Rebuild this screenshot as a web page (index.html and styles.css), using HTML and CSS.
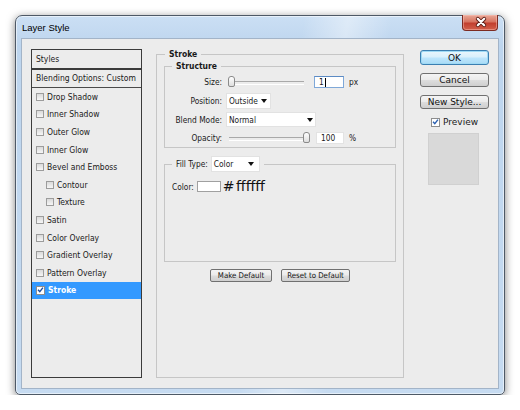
FILE: index.html
```html
<!DOCTYPE html>
<html lang="en">
<head>
<meta charset="utf-8">
<title>Layer Style</title>
<link rel="stylesheet" href="styles.css">
</head>
<body>
<div class="window">
  <div class="titlebar">
    <span class="title">Layer Style</span>
    <div class="close-btn">
      <svg width="36" height="15" viewBox="0 0 36 15">
        <path d="M14.8 3.8 L21.2 10.2 M21.2 3.8 L14.8 10.2" stroke="#5b1c15" stroke-width="4" stroke-linecap="round"/>
        <path d="M14.8 3.8 L21.2 10.2 M21.2 3.8 L14.8 10.2" stroke="#ffffff" stroke-width="2.2" stroke-linecap="round"/>
      </svg>
    </div>
  </div>

  <div class="client">
    <div class="styles-panel">
      <div class="panel-head">Styles</div>
      <div class="panel-blend">Blending Options: Custom</div>
      <ul class="fx-list">
        <li class="fx"><span class="cb"></span>Drop Shadow</li>
        <li class="fx"><span class="cb"></span>Inner Shadow</li>
        <li class="fx"><span class="cb"></span>Outer Glow</li>
        <li class="fx"><span class="cb"></span>Inner Glow</li>
        <li class="fx"><span class="cb"></span>Bevel and Emboss</li>
        <li class="fx sub"><span class="cb"></span>Contour</li>
        <li class="fx sub"><span class="cb"></span>Texture</li>
        <li class="fx"><span class="cb"></span>Satin</li>
        <li class="fx"><span class="cb"></span>Color Overlay</li>
        <li class="fx"><span class="cb"></span>Gradient Overlay</li>
        <li class="fx"><span class="cb"></span>Pattern Overlay</li>
        <li class="fx selected"><span class="cb checked"><svg width="8" height="8" viewBox="0 0 8 8"><path d="M1.2 3.8 L3.2 6 L6.8 1.3" fill="none" stroke="#1d4e9e" stroke-width="1.6"/></svg></span>Stroke</li>
      </ul>
    </div>

    <div class="main">
      <fieldset class="group stroke">
        <legend>Stroke</legend>

        <fieldset class="group structure">
          <legend>Structure</legend>
          <div class="structure-body">
            <div class="row row-size">
              <span class="label">Size:</span>
              <div class="slider size-slider"><span class="thumb"></span></div>
              <div class="field field-size focused">1<span class="caret"></span></div>
              <span class="unit">px</span>
            </div>
            <div class="row row-pos">
              <span class="label">Position:</span>
              <div class="select select-pos">Outside</div>
            </div>
            <div class="row row-blend">
              <span class="label">Blend Mode:</span>
              <div class="select select-blend">Normal</div>
            </div>
            <div class="row row-opacity">
              <span class="label">Opacity:</span>
              <div class="slider opacity-slider"><span class="thumb"></span></div>
              <div class="field field-opacity">100</div>
              <span class="unit">%</span>
            </div>
          </div>
        </fieldset>

        <fieldset class="group fill">
          <legend><span class="fill-label">Fill Type:</span><span class="select select-fill">Color</span></legend>
          <div class="fill-body">
            <div class="color-row">
              <span class="color-label">Color:</span>
              <span class="swatch"></span>
              <span class="hex"># ffffff</span>
            </div>
          </div>
        </fieldset>

        <div class="defaults">
          <div class="btn btn-small btn-make">Make Default</div>
          <div class="btn btn-small btn-reset">Reset to Default</div>
        </div>
      </fieldset>
    </div>

    <div class="actions">
      <div class="btn btn-ok">OK</div>
      <div class="btn btn-cancel">Cancel</div>
      <div class="btn btn-new">New Style...</div>
      <div class="preview-row">
        <span class="cb checked"><svg width="8" height="8" viewBox="0 0 8 8"><path d="M1.2 3.8 L3.2 6 L6.8 1.3" fill="none" stroke="#2a5fb0" stroke-width="1.6"/></svg></span>
        <span>Preview</span>
      </div>
      <div class="preview-swatch"></div>
    </div>
  </div>
</div>
</body>
</html>
```

FILE: styles.css
```css
* {
  box-sizing: border-box;
}

html,
body {
  margin: 0;
  padding: 0;
  background: #ffffff;
}

body {
  font-family: "DejaVu Sans Condensed", "DejaVu Sans", sans-serif;
  font-stretch: condensed;
  color: #1a1a1a;
}

/* Aero window frame */
.window {
  width: 490px;
  height: 380px;
  margin: 15px 0 0 15px;
  border: 1px solid #4e5966;
  border-radius: 7px 7px 5px 5px;
  background:
    linear-gradient(100deg, rgba(255, 255, 255, 0) 52%, rgba(255, 255, 255, 0.4) 60%, rgba(255, 255, 255, 0) 68%),
    linear-gradient(#cbdff4, #bdd5ee 30px, #c6dbf1);
  box-shadow: 0 2px 9px rgba(0, 0, 0, 0.5), inset 0 0 0 1px rgba(255, 255, 255, 0.55);
  display: flex;
  flex-direction: column;
}

.titlebar {
  height: 22px;
  display: flex;
  align-items: flex-start;
  padding-left: 6px;
}

.title {
  font-family: "Liberation Sans", sans-serif;
  font-stretch: normal;
  font-size: 9.5px;
  line-height: 23px;
  color: #000;
}

.close-btn {
  margin-left: auto;
  margin-right: 6px;
  margin-top: -1px;
  width: 36px;
  height: 16px;
  border: 1px solid #7c2b22;
  border-top: none;
  border-radius: 0 0 4px 4px;
  background: linear-gradient(#e9a998, #d77461 45%, #c23f2f 55%, #d2604b);
  box-shadow: inset 0 0 0 1px rgba(255, 200, 190, 0.45);
}

.close-btn svg {
  display: block;
}

/* dialog body */
.client {
  height: 351px;
  margin: 0 5px;
  border: 1px solid #a3b4c8;
  background: #ececec;
  display: flex;
  padding: 10px 9px;
}

/* style list */
.styles-panel {
  width: 111px;
  border: 1px solid #3b3b3b;
  display: flex;
  flex-direction: column;
  font-size: 8.5px;
}

.panel-head {
  height: 20px;
  line-height: 18px;
  padding-left: 4px;
  border-bottom: 2px solid #3b3b3b;
}

.panel-blend {
  height: 18px;
  line-height: 17px;
  padding-left: 4px;
  border-bottom: 1px solid #4a4a4a;
}

.fx-list {
  list-style: none;
  margin: 0;
  padding: 0;
}

.fx {
  height: 17.6px;
  display: flex;
  align-items: center;
  gap: 3px;
  padding-left: 4px;
}

.fx.sub {
  padding-left: 14px;
}

.fx.selected {
  background: #3399ff;
  color: #ffffff;
  font-weight: bold;
}

.cb {
  width: 8px;
  height: 8px;
  flex: none;
  border: 1px solid #9c9c9c;
  background: linear-gradient(#dadada, #f6f6f6);
  display: flex;
  align-items: center;
  justify-content: center;
}

.cb svg {
  display: block;
}

.cb.checked {
  width: 9px;
  height: 9px;
  background: #ffffff;
  border-color: #8d8d8d;
}

/* middle column */
.main {
  width: 248px;
  margin-left: 14px;
}

.group {
  margin: 0;
  padding: 0;
  min-width: 0;
  border: 1px solid #c6c6c6;
}

.group > legend {
  padding: 0 4px;
  line-height: 11px;
  font-size: 8.5px;
  font-weight: bold;
}

.stroke {
  height: 100%;
  padding: 0 7px;
}

.stroke > legend {
  margin-left: 1px;
}

.structure {
  margin-top: 1px;
}

.structure > legend {
  margin-left: 7px;
}

.structure-body {
  padding: 1px 0 1px;
}

.row {
  display: flex;
  align-items: center;
  font-size: 8.3px;
}

.row-size {
  height: 18px;
}

.row-pos,
.row-blend {
  height: 19px;
}

.row-opacity {
  height: 17px;
}

.label {
  width: 57px;
  margin-right: 4px;
  text-align: right;
}

.slider {
  position: relative;
  height: 12px;
}

.slider::before {
  content: "";
  position: absolute;
  left: 3px;
  right: 3px;
  top: 5px;
  height: 2px;
  border-top: 1px solid #a9a9a9;
  border-bottom: 1px solid #ffffff;
}

.thumb {
  position: absolute;
  top: 0;
  width: 7px;
  height: 11px;
  border: 1px solid #8a8a8a;
  border-radius: 3px 3px 2px 2px;
  background: linear-gradient(#ffffff, #dedede);
}

.size-slider {
  width: 81px;
  margin-right: 7px;
}

.size-slider .thumb {
  left: 2px;
}

.opacity-slider {
  width: 84px;
  margin-right: 6px;
}

.opacity-slider .thumb {
  right: 0;
}

.field {
  height: 12px;
  display: flex;
  align-items: center;
  padding-left: 4px;
  background: #ffffff;
  border: 1px solid #e3e3e3;
  font-size: 8.3px;
  margin-right: 5px;
}

.field.focused {
  border-color: #7fa8d8;
  border-top-color: #5c8bc4;
}

.field-size {
  width: 30px;
}

.field-opacity {
  width: 28px;
}

.caret {
  width: 1px;
  height: 9px;
  background: #000;
  margin-left: 1px;
}

.select {
  display: flex;
  align-items: center;
  justify-content: space-between;
  background: #ffffff;
  border: 1px solid #e2e2e2;
  padding: 0 3px 0 2px;
  font-size: 8.3px;
  font-weight: normal;
}

.select::after {
  content: "";
  width: 0;
  height: 0;
  border-left: 3.5px solid transparent;
  border-right: 3.5px solid transparent;
  border-top: 4px solid #111;
}

.select-pos {
  width: 45px;
  height: 16px;
}

.select-blend {
  width: 90px;
  height: 15px;
  padding-right: 2px;
}

.fill {
  margin-top: 8px;
}

.fill > legend {
  margin-left: 7px;
  display: flex;
  align-items: center;
  font-weight: normal;
}

.fill-label {
  font-size: 8.3px;
  margin-right: 3px;
}

.select-fill {
  width: 49px;
  height: 16px;
  padding-right: 5px;
}

.fill-body {
  height: 89px;
  padding: 9px 0 0 7px;
}

.color-row {
  display: flex;
  align-items: center;
  height: 11px;
  font-size: 8.3px;
}

.color-label {
  margin-right: 3px;
}

.swatch {
  width: 24px;
  height: 11px;
  background: #ffffff;
  border: 1px solid #a0a0a0;
}

.hex {
  font-family: "DejaVu Sans", sans-serif;
  font-stretch: normal;
  font-size: 14px;
  line-height: 11px;
  margin-left: 2px;
  word-spacing: -3px;
  color: #111;
}

.defaults {
  display: flex;
  justify-content: center;
  gap: 9px;
  margin-top: 7px;
}

/* buttons */
.btn {
  display: flex;
  align-items: center;
  justify-content: center;
  border: 1px solid #707070;
  border-radius: 3px;
  background: linear-gradient(#f4f4f4 0%, #ebebeb 48%, #dddddd 52%, #cfcfcf 100%);
  color: #111;
  white-space: nowrap;
}

.btn-small {
  height: 13px;
  font-size: 7.8px;
  border-radius: 2px;
}

.btn-make {
  width: 62px;
}

.btn-reset {
  width: 69px;
}

/* right column */
.actions {
  width: 69px;
  margin-left: 16px;
  display: flex;
  flex-direction: column;
  font-family: "DejaVu Sans", sans-serif;
  font-stretch: normal;
  font-size: 9px;
}

.btn-ok {
  margin-top: 1px;
  height: 15px;
  border-color: #3c7fb1;
  background: linear-gradient(#eaf6fd 0%, #d9f0fc 48%, #bee6fd 52%, #a9dbf6 100%);
  box-shadow: inset 0 0 0 1px #9fdaf5;
}

.btn-cancel {
  margin-top: 8px;
  height: 14px;
}

.btn-new {
  margin-top: 8px;
  height: 14px;
}

.preview-row {
  margin-top: 7px;
  height: 12px;
  display: flex;
  align-items: center;
  gap: 3px;
  padding-left: 11px;
}

.preview-swatch {
  margin: 5px 0 0 8px;
  width: 51px;
  height: 52px;
  background: #d9d9d9;
  border: 1px solid #d0d0d0;
}
```
